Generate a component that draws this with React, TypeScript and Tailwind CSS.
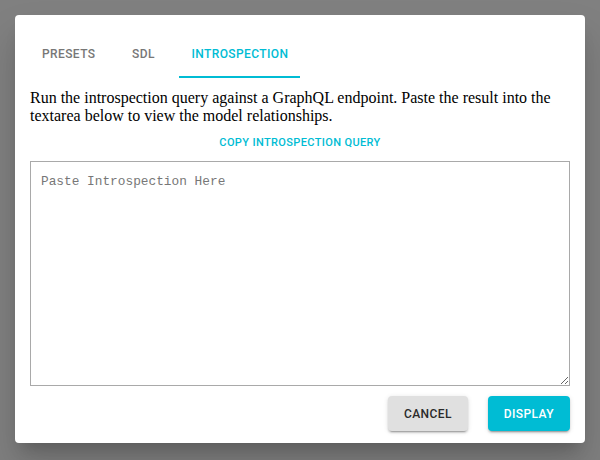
import { useState } from "react";

const tabs = ["Presets", "SDL", "Introspection"];

export default function App() {
  const [active, setActive] = useState(2);
  const [value, setValue] = useState("");

  return (
    <div className="min-h-screen w-full bg-[#808080] p-[15px] font-['Roboto',sans-serif]">
      <div className="flex flex-col rounded-[4px] bg-white px-[15px] pt-[15px] pb-[12px] shadow-[0_11px_15px_-7px_rgba(0,0,0,0.2),0_24px_38px_3px_rgba(0,0,0,0.14)]">
        {/* tabs */}
        <div className="flex h-[48px]">
          {tabs.map((tab, i) => (
            <button
              key={tab}
              onClick={() => setActive(i)}
              className={`relative flex h-[48px] min-w-[72px] items-center justify-center px-[12px] text-[12px] font-medium uppercase tracking-[0.4px] ${
                active === i ? "text-[#00bcd4]" : "text-[#777777]"
              }`}
            >
              {tab}
              {active === i && (
                <span className="absolute bottom-0 left-0 h-[2px] w-full bg-[#00bcd4]" />
              )}
            </button>
          ))}
        </div>

        <p className="mt-[11px] font-['Liberation_Serif',serif] text-[16px] leading-[18px] text-black">
          Run the introspection query against a GraphQL endpoint. Paste the result into the textarea below to view the model relationships.
        </p>

        <div className="mt-[3px] flex justify-center">
          <button className="flex h-[30px] items-center rounded-[4px] px-[5px] text-[11px] font-medium uppercase tracking-[0.37px] text-[#00bcd4]">
            Copy Introspection Query
          </button>
        </div>

        <textarea
          value={value}
          onChange={(e) => setValue(e.target.value)}
          placeholder="Paste Introspection Here"
          className="mt-[3px] h-[225px] w-full border border-[#a9a9a9] px-[10px] pt-[12px] pb-[10px] font-['Liberation_Mono',monospace] text-[12.8px] leading-[15px] text-black outline-none placeholder:text-[#777777]"
        />

        <div className="mt-[10px] flex justify-end gap-[20px]">
          <button className="h-[35px] min-w-[64px] rounded-[4px] bg-[#e0e0e0] px-[16px] text-[12px] font-medium uppercase tracking-[0.4px] text-[#2a2a2a] shadow-[0_3px_1px_-2px_rgba(0,0,0,0.2),0_2px_2px_0_rgba(0,0,0,0.14),0_1px_5px_0_rgba(0,0,0,0.12)]">
            Cancel
          </button>
          <button className="h-[35px] min-w-[64px] rounded-[4px] bg-[#00bcd4] px-[16px] text-[12px] font-medium uppercase tracking-[0.4px] text-white shadow-[0_3px_1px_-2px_rgba(0,0,0,0.2),0_2px_2px_0_rgba(0,0,0,0.14),0_1px_5px_0_rgba(0,0,0,0.12)]">
            Display
          </button>
        </div>
      </div>
    </div>
  );
}
